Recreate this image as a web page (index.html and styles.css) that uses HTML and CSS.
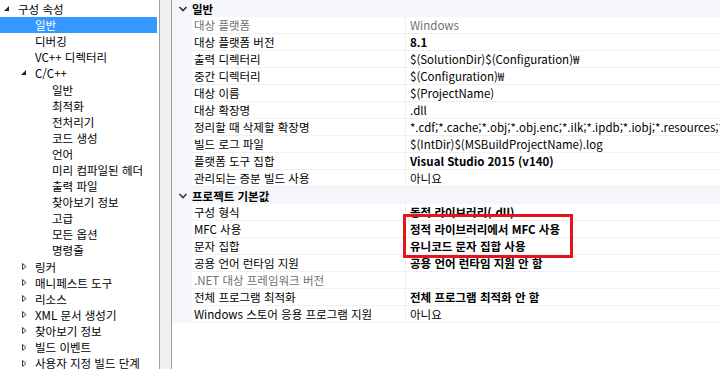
FILE: index.html
```html
<!DOCTYPE html>
<html lang="ko">
<head>
    <meta charset="UTF-8">
    <title>속성 페이지</title>
    <link rel="stylesheet" href="styles.css">
</head>
<body>

<div class="page">
    <!-- 왼쪽 트리 -->
    <div class="tree">
        <div class="node lv0"><span class="exp"><svg width="8" height="8" viewBox="0 0 8 8"><polygon points="6,1 6,6 1,6" fill="#262626"/></svg></span>구성 속성</div>
        <div class="node lv1 sel"><span class="exp"></span>일반</div>
        <div class="node lv1"><span class="exp"></span>디버깅</div>
        <div class="node lv1"><span class="exp"></span>VC++ 디렉터리</div>
        <div class="node lv1"><span class="exp"><svg width="8" height="8" viewBox="0 0 8 8"><polygon points="6,1 6,6 1,6" fill="#262626"/></svg></span>C/C++</div>
        <div class="node lv2"><span class="exp"></span>일반</div>
        <div class="node lv2"><span class="exp"></span>최적화</div>
        <div class="node lv2"><span class="exp"></span>전처리기</div>
        <div class="node lv2"><span class="exp"></span>코드 생성</div>
        <div class="node lv2"><span class="exp"></span>언어</div>
        <div class="node lv2"><span class="exp"></span>미리 컴파일된 헤더</div>
        <div class="node lv2"><span class="exp"></span>출력 파일</div>
        <div class="node lv2"><span class="exp"></span>찾아보기 정보</div>
        <div class="node lv2"><span class="exp"></span>고급</div>
        <div class="node lv2"><span class="exp"></span>모든 옵션</div>
        <div class="node lv2"><span class="exp"></span>명령줄</div>
        <div class="node lv1"><span class="exp"><svg width="8" height="9" viewBox="0 0 8 9"><polygon points="2.5,1.5 6,4.5 2.5,7.5" fill="none" stroke="#404040" stroke-width="1"/></svg></span>링커</div>
        <div class="node lv1"><span class="exp"><svg width="8" height="9" viewBox="0 0 8 9"><polygon points="2.5,1.5 6,4.5 2.5,7.5" fill="none" stroke="#404040" stroke-width="1"/></svg></span>매니페스트 도구</div>
        <div class="node lv1"><span class="exp"><svg width="8" height="9" viewBox="0 0 8 9"><polygon points="2.5,1.5 6,4.5 2.5,7.5" fill="none" stroke="#404040" stroke-width="1"/></svg></span>리소스</div>
        <div class="node lv1"><span class="exp"><svg width="8" height="9" viewBox="0 0 8 9"><polygon points="2.5,1.5 6,4.5 2.5,7.5" fill="none" stroke="#404040" stroke-width="1"/></svg></span>XML 문서 생성기</div>
        <div class="node lv1"><span class="exp"><svg width="8" height="9" viewBox="0 0 8 9"><polygon points="2.5,1.5 6,4.5 2.5,7.5" fill="none" stroke="#404040" stroke-width="1"/></svg></span>찾아보기 정보</div>
        <div class="node lv1"><span class="exp"><svg width="8" height="9" viewBox="0 0 8 9"><polygon points="2.5,1.5 6,4.5 2.5,7.5" fill="none" stroke="#404040" stroke-width="1"/></svg></span>빌드 이벤트</div>
        <div class="node lv1"><span class="exp"><svg width="8" height="9" viewBox="0 0 8 9"><polygon points="2.5,1.5 6,4.5 2.5,7.5" fill="none" stroke="#404040" stroke-width="1"/></svg></span>사용자 지정 빌드 단계</div>
    </div>

    <div class="splitter"></div>

    <!-- 오른쪽 속성 그리드 -->
    <div class="props">
        <div class="cat"><span class="chev"><svg width="10" height="8" viewBox="0 0 10 8"><polyline points="1.5,2 5,5.5 8.5,2" fill="none" stroke="#333" stroke-width="1.6"/></svg></span><span class="cat-name">일반</span></div>
        <div class="row dim"><span class="gut"></span><span class="name">대상 플랫폼</span><span class="val">Windows</span></div>
        <div class="row"><span class="gut"></span><span class="name">대상 플랫폼 버전</span><span class="val b">8.1</span></div>
        <div class="row"><span class="gut"></span><span class="name">출력 디렉터리</span><span class="val">$(SolutionDir)$(Configuration)₩</span></div>
        <div class="row"><span class="gut"></span><span class="name">중간 디렉터리</span><span class="val">$(Configuration)₩</span></div>
        <div class="row"><span class="gut"></span><span class="name">대상 이름</span><span class="val">$(ProjectName)</span></div>
        <div class="row"><span class="gut"></span><span class="name">대상 확장명</span><span class="val">.dll</span></div>
        <div class="row"><span class="gut"></span><span class="name">정리할 때 삭제할 확장명</span><span class="val">*.cdf;*.cache;*.obj;*.obj.enc;*.ilk;*.ipdb;*.iobj;*.resources;*.tlb;*.tli;*</span></div>
        <div class="row"><span class="gut"></span><span class="name">빌드 로그 파일</span><span class="val">$(IntDir)$(MSBuildProjectName).log</span></div>
        <div class="row"><span class="gut"></span><span class="name">플랫폼 도구 집합</span><span class="val b">Visual Studio 2015 (v140)</span></div>
        <div class="row"><span class="gut"></span><span class="name">관리되는 증분 빌드 사용</span><span class="val">아니요</span></div>
        <div class="cat"><span class="chev"><svg width="10" height="8" viewBox="0 0 10 8"><polyline points="1.5,2 5,5.5 8.5,2" fill="none" stroke="#333" stroke-width="1.6"/></svg></span><span class="cat-name">프로젝트 기본값</span></div>
        <div class="row"><span class="gut"></span><span class="name">구성 형식</span><span class="val b">동적 라이브러리(.dll)</span></div>
        <div class="row"><span class="gut"></span><span class="name">MFC 사용</span><span class="val b">정적 라이브러리에서 MFC 사용</span></div>
        <div class="row"><span class="gut"></span><span class="name">문자 집합</span><span class="val b">유니코드 문자 집합 사용</span></div>
        <div class="row"><span class="gut"></span><span class="name">공용 언어 런타임 지원</span><span class="val b">공용 언어 런타임 지원 안 함</span></div>
        <div class="row dim"><span class="gut"></span><span class="name">.NET 대상 프레임워크 버전</span><span class="val"></span></div>
        <div class="row"><span class="gut"></span><span class="name">전체 프로그램 최적화</span><span class="val b">전체 프로그램 최적화 안 함</span></div>
        <div class="row"><span class="gut"></span><span class="name">Windows 스토어 응용 프로그램 지원</span><span class="val">아니요</span></div>

        <!-- 빨간 강조 표시 -->
        <div class="mark"></div>
    </div>
</div>

</body>
</html>
```

FILE: styles.css
```css
body {
    margin: 0;
    font-family: "Noto Sans CJK KR", "Noto Sans", sans-serif;
    font-size: 11.5px;
    color: #000;
    background: #fff;
    overflow: hidden;
}

.page { display: flex; width: 720px; height: 369px; }

/* tree */
.tree {
    width: 160px;
    box-sizing: border-box;
    border-right: 1px solid #a0a0a0;
    padding: 1px 2px 0 0;
    overflow: hidden;
}
.node {
    display: flex;
    align-items: center;
    height: 16.1px;
    line-height: 16px;
    white-space: nowrap;
}
.node.sel { background: #3399ff; color: #fff; }
.exp { width: 17px; height: 16px; display: flex; align-items: center; justify-content: flex-start; padding-left: 2px; box-sizing: border-box; }
.lv0 { padding-left: 1px; }
.lv1 { padding-left: 18px; }
.lv2 { padding-left: 35px; }

.splitter { width: 11px; background: #f0f0f0; }

/* property grid */
.props {
    flex: 1;
    position: relative;
    border-left: 1px solid #a0a0a0;
    overflow: hidden;
}
.cat {
    display: flex;
    align-items: center;
    height: 17px;
    background: #f5f6f9;
    font-weight: bold;
    white-space: nowrap;
}
.chev { width: 20px; display: flex; justify-content: center; padding-left: 1px; box-sizing: border-box; }
.cat-name { padding-left: 0; }

.row {
    display: grid;
    grid-template-columns: 20px 214px 1fr;
    height: 17px;
    line-height: 16px;
    white-space: nowrap;
}
.gut { background: #f5f6f9; }
.name, .val {
    border-bottom: 1px solid #eef0f3;
    overflow: hidden;
}
.name { padding-left: 2px; border-right: 1px solid #eef0f3; }
.val { padding-left: 4px; }
.b { font-weight: bold; }
.dim { color: #707070; }

.mark {
    position: absolute;
    left: 231px;
    top: 214px;
    width: 170px;
    height: 44px;
    box-sizing: border-box;
    border: 3px solid #e3141e;
}
```
